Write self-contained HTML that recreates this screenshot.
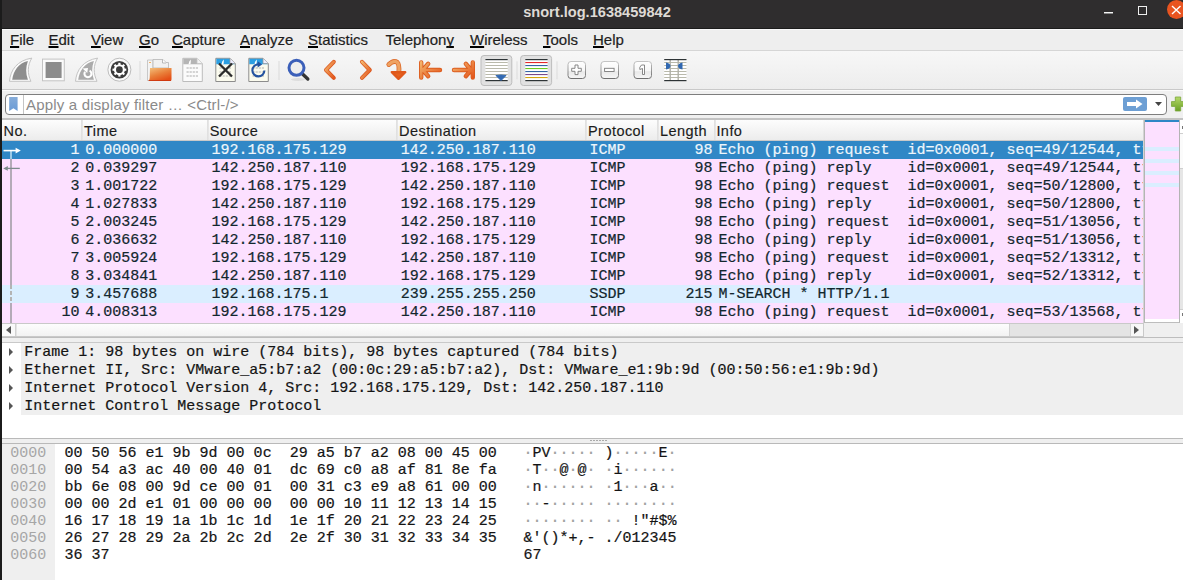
<!DOCTYPE html>
<html><head><meta charset="utf-8">
<style>
*{margin:0;padding:0;box-sizing:border-box}
html,body{width:1183px;height:580px;overflow:hidden;background:#efefef;font-family:"Liberation Sans",sans-serif}
.abs{position:absolute}
#leftstrip{position:absolute;left:0;top:0;width:2px;height:580px;background:#1b1b1b;z-index:50}
#title{position:absolute;left:0;top:0;width:1183px;height:28px;background:#2f2d2e;border-bottom:0}
#title .t{position:absolute;left:0;width:1194px;top:4.5px;text-align:center;color:#dedad5;font-weight:bold;font-size:14.6px;line-height:14px}
#titleline{position:absolute;left:0;top:28px;width:1183px;height:1px;background:#1c1c1c}
#menubar{position:absolute;left:0;top:29px;width:1183px;height:21px;background:#eeeeee;border-top:1px solid #f9f9f9}
.mi{position:absolute;top:1px;font-size:15px;line-height:17px;color:#1e1e1e;-webkit-text-stroke:0.2px #1e1e1e;white-space:pre}
.mi u{text-decoration:underline;text-decoration-thickness:2px;text-underline-offset:1px;text-decoration-color:#000;text-decoration-skip-ink:none}
#menuline{position:absolute;left:0;top:50px;width:1183px;height:1px;background:#d6d6d6}
#toolbar{position:absolute;left:0;top:51px;width:1183px;height:38px;background:linear-gradient(#f7f7f7,#ededed)}
#toolline{position:absolute;left:0;top:89px;width:1183px;height:1px;background:#c9c9c9}
#filterbar{position:absolute;left:0;top:90px;width:1183px;height:28px;background:#f0f0f0;border-top:1px solid #fbfbfb}
#fbox{position:absolute;left:5px;top:94px;width:1162px;height:21px;background:#fff;border:1px solid #7e7e7e;border-radius:4px}
#fph{position:absolute;left:26px;top:96px;font-size:15px;line-height:17px;color:#8a8a8a;letter-spacing:0.18px;white-space:pre}
#bandline{position:absolute;left:0;top:118px;width:1183px;height:2px;background:#c3c3c3}
/* packet list */
#plist{position:absolute;left:2px;top:120px;width:1142px;height:203px;background:#fff;overflow:hidden}
#hdr{position:absolute;left:0;top:120px;width:1144px;height:21px;background:linear-gradient(#fdfdfd,#ececec);border-bottom:1px solid #c9c9c9}
.hc{position:absolute;top:3px;font-size:14.5px;letter-spacing:0.45px;line-height:16px;color:#1b1b1b;-webkit-text-stroke:0.15px #1b1b1b;white-space:pre}
.hs{position:absolute;top:120px;width:2px;height:20px;background:linear-gradient(90deg,#dedede,#e8e8e8)}
.r{position:absolute;left:2px;width:1141.3px;height:18px;font-family:"Liberation Mono",monospace;font-size:15px;line-height:18px;color:#12272e;-webkit-text-stroke:0.2px currentColor;white-space:pre;overflow:hidden}
.r.icmp{background:#fce0ff}
.r.ssdp{background:#daeeff}
.r.sel{background:#3087c6;color:#eef6fb}
.c{position:absolute;top:1px}
.no{right:1063.8px;text-align:right}
.tm{left:83.3px}
.sr{left:209.5px}
.ds{left:398.8px}
.pr{left:587.6px}
.ln{right:430.8px;text-align:right}
.inf{left:716.5px}
#minimap{position:absolute;left:1144px;top:120px;width:36px;height:203px;background:#fff;border-left:1px solid #c8c8c8}
#vscroll{position:absolute;left:1180px;top:120px;width:3px;height:203px;background:#f4f4f4;border-left:1px solid #d0d0d0}
#hscroll{position:absolute;left:2px;top:323px;width:1142px;height:14px;border-right:1px solid #c9c9c9;background:#e4e4e4;border-top:1px solid #c9c9c9;border-bottom:1px solid #c9c9c9}
#hhandle{position:absolute;left:15px;top:0;width:993px;height:12px;background:linear-gradient(#fdfdfd,#f2f2f2);border-right:1px solid #d2d2d2}
#split1{position:absolute;left:0;top:337px;width:1183px;height:5px;background:#efefef;border-top:1px solid #bdbdbd}
/* detail */
#detail{position:absolute;left:2px;top:342px;width:1181px;height:97px;background:#fff;border-top:1px solid #c9c9c9}
.tr{position:absolute;left:2px;width:1181px;height:18px;font-family:"Liberation Mono",monospace;font-size:15px;line-height:19px;color:#141414;-webkit-text-stroke:0.2px currentColor;white-space:pre}
.tr .tt{position:absolute;left:19.2px;top:0;right:0;padding-left:3.1px;background:#efefef;height:18px}
.exp{position:absolute;left:7.2px;top:4.5px;width:0;height:0;border-left:4px solid #555;border-top:4px solid transparent;border-bottom:4px solid transparent}
#split2{position:absolute;left:0;top:438px;width:1183px;height:6px;background:#efefef;border-top:1px solid #b9b9b9;border-bottom:1px solid #b9b9b9}
/* bytes */
#bytes{position:absolute;left:2px;top:444px;width:1181px;height:136px;background:#fff}
#offbg{position:absolute;left:2px;top:444px;width:53px;height:136px;background:#efefef}
.hr{position:absolute;left:0;width:1183px;height:17px;font-family:"Liberation Mono",monospace;font-size:15px;line-height:19px;color:#141414;-webkit-text-stroke:0.2px currentColor;white-space:pre}
.off{position:absolute;left:10.3px;color:#a6a6a6;-webkit-text-stroke:0}
.hx{position:absolute;left:64.6px}
.as{position:absolute;left:523.4px}
.as i{font-style:normal;color:#a0a0a0}
</style></head><body>
<div id="title"><div class="t">snort.log.1638459842</div></div>
<div id="titleline"></div>
<!-- window buttons -->
<div class="abs" style="left:1104px;top:12px;width:9px;height:1px;background:#f4f4f4"></div><div class="abs" style="left:1104px;top:13px;width:9px;height:1px;background:#8a8a8a"></div>
<div class="abs" style="left:1138px;top:6px;width:9px;height:8.5px;border:1.3px solid #eeeeee"></div>
<div class="abs" style="left:1167px;top:0px;width:19px;height:19px;border-radius:50%;background:#e95420"></div>
<svg class="abs" style="left:1170px;top:4px" width="13" height="12" viewBox="0 0 13 12"><path d="M2 2 L10.5 10 M10.5 2 L2 10" stroke="#fff" stroke-width="1.4"/></svg>
<div id="menubar">
<span class="mi" style="left:10px"><u>F</u>ile</span>
<span class="mi" style="left:48.5px"><u>E</u>dit</span>
<span class="mi" style="left:91px"><u>V</u>iew</span>
<span class="mi" style="left:139px"><u>G</u>o</span>
<span class="mi" style="left:172px"><u>C</u>apture</span>
<span class="mi" style="left:240px"><u>A</u>nalyze</span>
<span class="mi" style="left:308px"><u>S</u>tatistics</span>
<span class="mi" style="left:385.5px">Telephon<u>y</u></span>
<span class="mi" style="left:470px"><u>W</u>ireless</span>
<span class="mi" style="left:543px"><u>T</u>ools</span>
<span class="mi" style="left:593px"><u>H</u>elp</span>
</div>
<div id="menuline"></div>
<div id="toolbar"></div>
<div id="toolline"></div>
<svg class="abs" style="left:0;top:0" width="700" height="90" viewBox="0 0 700 90">
<defs>
<linearGradient id="gor" x1="0" y1="0" x2="1" y2="1"><stop offset="0" stop-color="#f3b36b"/><stop offset="1" stop-color="#e4561c"/></linearGradient>
<linearGradient id="gfold" x1="0" y1="0" x2="0.6" y2="1"><stop offset="0" stop-color="#f4c27f"/><stop offset="0.55" stop-color="#e9803a"/><stop offset="1" stop-color="#e44f16"/></linearGradient>
<linearGradient id="gbtn" x1="0" y1="0" x2="0" y2="1"><stop offset="0" stop-color="#fefefe"/><stop offset="0.55" stop-color="#f7f7f7"/><stop offset="0.6" stop-color="#e9e9e9"/><stop offset="1" stop-color="#f6f6f6"/></linearGradient>
<linearGradient id="gbord" x1="0" y1="0" x2="0" y2="1"><stop offset="0" stop-color="#c4c4c4"/><stop offset="1" stop-color="#6f6f6f"/></linearGradient>
</defs>
<!-- 1 shark fin (disabled) -->
<path d="M9.5 81.3 C10.5 70 17 60.5 31.8 58.1 C27.3 65.5 27.3 73.5 30.9 81.3 Z" fill="#fbfbfb" stroke="#c3c3c3" stroke-width="1"/>
<path d="M12.2 79.7 C13.5 70.5 18.5 63.2 27.9 60.9 C25.6 67 25.6 73.5 27.9 79.7 Z" fill="#8e8e8e"/>
<!-- 2 stop -->
<rect x="42.5" y="59.1" width="21.8" height="21.7" fill="#fbfbfb" stroke="#c3c3c3" stroke-width="1"/>
<rect x="45.6" y="62" width="16" height="16" fill="#8c8c8c"/>
<!-- 3 restart fin -->
<path d="M75.5 81.3 C76.5 70 83 60.5 97.6 58.1 C93.2 65.5 93.2 73.5 97 81.3 Z" fill="#fbfbfb" stroke="#c3c3c3" stroke-width="1"/>
<path d="M78.2 79.7 C79.5 70.5 84.5 63.2 93.9 60.9 C91.6 67 91.6 73.5 93.9 79.7 Z" fill="#ababab"/>
<path d="M85 71.8 A3.5 3.5 0 1 0 89.6 70.6" fill="none" stroke="#fff" stroke-width="2.1"/>
<path d="M82.6 68.6 L88 67.9 L87.2 73 Z" fill="#fff"/>
<!-- 4 gear -->
<circle cx="119.4" cy="69.7" r="11.5" fill="#fafafa" stroke="#b5b5b5" stroke-width="0.9"/>
<circle cx="119.4" cy="69.7" r="8.8" fill="#3b3b3b"/>
<g fill="#fff"><rect x="118.30" y="62.80" width="2.2" height="2.2" transform="rotate(0 119.4 69.7)"/><rect x="118.30" y="62.80" width="2.2" height="2.2" transform="rotate(45 119.4 69.7)"/><rect x="118.30" y="62.80" width="2.2" height="2.2" transform="rotate(90 119.4 69.7)"/><rect x="118.30" y="62.80" width="2.2" height="2.2" transform="rotate(135 119.4 69.7)"/><rect x="118.30" y="62.80" width="2.2" height="2.2" transform="rotate(180 119.4 69.7)"/><rect x="118.30" y="62.80" width="2.2" height="2.2" transform="rotate(225 119.4 69.7)"/><rect x="118.30" y="62.80" width="2.2" height="2.2" transform="rotate(270 119.4 69.7)"/><rect x="118.30" y="62.80" width="2.2" height="2.2" transform="rotate(315 119.4 69.7)"/></g>
<circle cx="119.4" cy="69.7" r="5.5" fill="#fff"/>
<circle cx="119.4" cy="69.7" r="3.4" fill="#3b3b3b"/>
<!-- sep -->
<rect x="139.5" y="61" width="1" height="19" fill="#dadada"/>
<!-- 6 folder -->
<path d="M147.5 60 H153 V80.5 H147.5 Z" fill="#f3f3f3" stroke="#bcbcbc" stroke-width="0.8"/>
<path d="M153 68 V59.5 H163 L166 62.5 H168.5 V68 Z" fill="#f1f1f1" stroke="#b5b5b5" stroke-width="0.8"/>
<path d="M162.5 59.5 L162.5 63 L166 63" fill="#fff" stroke="#aaa" stroke-width="0.8"/>
<rect x="149" y="62" width="2" height="0.8" fill="#f0a040"/>
<path d="M150 68 H171.5 V79.5 Q171.5 81 170 81 H148.5 Q149.5 80 149.7 78 Z" fill="url(#gfold)"/>
<path d="M148.8 80.3 H171 V81 H148.5 Z" fill="#c8300e"/>
<!-- 7 grey file -->
<path d="M182.8 58.3 H197 L202.3 63.6 V81.5 H182.8 Z" fill="#fbfbfb" stroke="#bcbcbc" stroke-width="1"/>
<path d="M183.3 58.8 H196.7 L201.8 63.9 V64.2 H183.3 Z" fill="#b5b5b5"/>
<path d="M188.5 64.2 Q189 60.5 191 59.5 L190.5 64.2 Z" fill="#fff"/>
<path d="M197 58.5 V63.6 H202.2" fill="#f4f4f4" stroke="#c4c4c4" stroke-width="0.8"/>
<g stroke="#d3d3d3" stroke-width="1.9" stroke-dasharray="2.2 0.9"><path d="M186.5 68 H198.5 M186.5 72 H198.5 M186.5 76 H198.5"/></g>
<!-- 8 close file -->
<path d="M215.8 58.3 H230 L235.3 63.6 V81.5 H215.8 Z" fill="#fbfbee" stroke="#8d8d8d" stroke-width="1"/>
<path d="M216.3 58.8 H229.7 L234.8 63.9 V64.2 H216.3 Z" fill="#2c9fe2"/>
<path d="M221.5 64.2 Q222 60.5 224 59.5 L223.5 64.2 Z" fill="#fff"/>
<path d="M230 58.5 V63.6 H235.2" fill="#eef" stroke="#9a9a9a" stroke-width="0.8"/>
<g stroke="#d6d6ce" stroke-width="1.9" stroke-dasharray="2.2 0.9"><path d="M219.5 68 H231.5 M219.5 72 H231.5 M219.5 76 H231.5"/></g>
<path d="M219 63.5 L232 76.5 M232 63.5 L219 76.5" stroke="#2b2b2b" stroke-width="2.3"/>
<!-- 9 reload file -->
<path d="M248.8 58.3 H263 L268.3 63.6 V81.5 H248.8 Z" fill="#fbfbee" stroke="#8d8d8d" stroke-width="1"/>
<path d="M249.3 58.8 H262.7 L267.8 63.9 V64.2 H249.3 Z" fill="#2c9fe2"/>
<path d="M254.5 64.2 Q255 60.5 257 59.5 L256.5 64.2 Z" fill="#fff"/>
<path d="M263 58.5 V63.6 H268.2" fill="#eef" stroke="#9a9a9a" stroke-width="0.8"/>
<g stroke="#d6d6ce" stroke-width="1.9" stroke-dasharray="2.2 0.9"><path d="M252.5 68 H264.5 M252.5 72 H264.5 M252.5 76 H264.5"/></g>
<path d="M264.4 70.5 A6 6 0 1 1 258.5 64.4" fill="none" stroke="#24539f" stroke-width="2.1"/>
<path d="M257.6 61.3 L262.2 64.4 L257.6 67.4 Z" fill="#24539f"/>
<!-- sep -->
<rect x="278.5" y="61" width="1" height="19" fill="#dadada"/>
<!-- 11 magnifier -->
<ellipse cx="298" cy="79.5" rx="7" ry="1.5" fill="#000" opacity="0.08"/>
<path d="M302 73.5 L307.8 79" stroke="#333" stroke-width="3.4" stroke-linecap="round"/>
<circle cx="296.5" cy="67.8" r="7.5" fill="#eeeeee" stroke="#3b5fb9" stroke-width="3"/>
<!-- 12 < -->
<path d="M333.8 61.8 L326 70 L333.8 77.8" fill="none" stroke="#d9541b" stroke-width="4" stroke-linecap="round" stroke-linejoin="round"/>
<path d="M333.8 61.8 L326 70 L333.8 77.8" fill="none" stroke="url(#gor)" stroke-width="2.6" stroke-linecap="round" stroke-linejoin="round"/>
<!-- 13 > -->
<path d="M362 61.8 L369.8 70 L362 77.8" fill="none" stroke="#d9541b" stroke-width="4" stroke-linecap="round" stroke-linejoin="round"/>
<path d="M362 61.8 L369.8 70 L362 77.8" fill="none" stroke="url(#gor)" stroke-width="2.6" stroke-linecap="round" stroke-linejoin="round"/>
<!-- 14 goto -->
<path d="M388.8 64.5 Q393.5 59.8 397.2 62.3 Q399.6 64.5 398.8 73" fill="none" stroke="#dd6a2a" stroke-width="4.8" stroke-linecap="round"/>
<path d="M388.8 64.5 Q393.5 59.8 397.2 62.3 Q399.6 64.5 398.8 73" fill="none" stroke="#eea262" stroke-width="3.2" stroke-linecap="round"/>
<path d="M391.8 72.2 L405.2 72.2 L398.5 78.8 Z" fill="#e5621f" stroke="#e0581a" stroke-width="2.4" stroke-linejoin="round"/>
<!-- 15 |<- -->
<path d="M421.2 62.4 V77.6 M440 70 H424 M428.2 63.8 L422.8 70 L428.2 76.2" fill="none" stroke="#dc5c1e" stroke-width="4.4" stroke-linecap="round" stroke-linejoin="round"/>
<path d="M421.2 62.4 V77.6 M440 70 H424 M428.2 63.8 L422.8 70 L428.2 76.2" fill="none" stroke="url(#gor)" stroke-width="2.6" stroke-linecap="round" stroke-linejoin="round"/>
<!-- 16 ->| -->
<path d="M472.8 62.4 V77.6 M454 70 H470 M465.8 63.8 L471.2 70 L465.8 76.2" fill="none" stroke="#dc5c1e" stroke-width="4.4" stroke-linecap="round" stroke-linejoin="round"/>
<path d="M472.8 62.4 V77.6 M454 70 H470 M465.8 63.8 L471.2 70 L465.8 76.2" fill="none" stroke="url(#gor)" stroke-width="2.6" stroke-linecap="round" stroke-linejoin="round"/>
<!-- 17 autoscroll toggled -->
<rect x="481" y="55.5" width="30.8" height="30" rx="3" fill="#e1e1e1" stroke="#bdbdbd" stroke-width="1"/>
<rect x="485.4" y="59" width="22.3" height="22" fill="#fff"/>
<g fill="#b9b9ab"><rect x="485.4" y="62" width="22.3" height="1"/><rect x="485.4" y="65" width="22.3" height="1"/><rect x="485.4" y="68" width="22.3" height="1"/><rect x="485.4" y="71" width="22.3" height="1"/><rect x="485.4" y="74" width="22.3" height="1"/><rect x="485.4" y="77" width="22.3" height="1"/></g>
<rect x="485.4" y="59" width="22.3" height="1.2" fill="#2e3436"/>
<rect x="485.4" y="80" width="22.3" height="1.2" fill="#2e3436"/>
<path d="M496 75.5 Q501 74.5 506 75.5 L501 80.5 Z" fill="#3168b1" stroke="#3168b1" stroke-width="1" stroke-linejoin="round"/>
<rect x="516.5" y="61.3" width="1" height="18" fill="#dcdcdc"/>
<!-- 19 colorize toggled -->
<rect x="520.6" y="55.5" width="31" height="30" rx="3" fill="#e1e1e1" stroke="#bdbdbd" stroke-width="1"/>
<rect x="525.3" y="59" width="22.3" height="22" fill="#fff"/>
<rect x="525.3" y="59" width="22.3" height="1.2" fill="#2e3436"/>
<rect x="525.3" y="62" width="22.3" height="1.1" fill="#e52a2a"/>
<rect x="525.3" y="65" width="22.3" height="1.1" fill="#3465a4"/>
<rect x="525.3" y="68" width="22.3" height="1.1" fill="#6ccb22"/>
<rect x="525.3" y="71" width="22.3" height="1.1" fill="#3465a4"/>
<rect x="525.3" y="74" width="22.3" height="1.1" fill="#7a4a8a"/>
<rect x="525.3" y="77" width="22.3" height="1.1" fill="#d5a50e"/>
<rect x="525.3" y="80" width="22.3" height="1.2" fill="#2e3436"/>
<rect x="556.5" y="61.3" width="1" height="18" fill="#dcdcdc"/>
<!-- 21 zoom in -->
<rect x="568" y="61.5" width="17.5" height="17" rx="3" fill="url(#gbtn)" stroke="url(#gbord)" stroke-width="1"/>
<path d="M575 65 H578 V68.3 H581.3 V71.3 H578 V74.6 H575 V71.3 H571.7 V68.3 H575 Z" fill="#fff" stroke="#7a7a7a" stroke-width="0.9"/>
<!-- 22 zoom out -->
<rect x="601" y="61.5" width="17.5" height="17" rx="3" fill="url(#gbtn)" stroke="url(#gbord)" stroke-width="1"/>
<rect x="604.6" y="68.3" width="9.5" height="3.2" fill="#fff" stroke="#7a7a7a" stroke-width="0.9"/>
<!-- 23 normal size -->
<rect x="634" y="61.5" width="17.5" height="17" rx="3" fill="url(#gbtn)" stroke="url(#gbord)" stroke-width="1"/>
<path d="M641.5 65 H644.5 V74.5 H642.5 V68.5 L639.8 69.5 V67.3 Z" fill="#fff" stroke="#7a7a7a" stroke-width="0.9"/>
<!-- 24 resize columns -->
<rect x="664.2" y="59" width="22.3" height="22" fill="#fff"/>
<g fill="#b9b9ab"><rect x="664.2" y="62" width="22.3" height="1"/><rect x="664.2" y="65" width="22.3" height="1"/><rect x="664.2" y="68" width="22.3" height="1"/><rect x="664.2" y="71" width="22.3" height="1"/><rect x="664.2" y="74" width="22.3" height="1"/><rect x="664.2" y="77" width="22.3" height="1"/></g>
<rect x="669.5" y="59" width="1.4" height="22" fill="#b1b1a8"/>
<rect x="677.5" y="59" width="1.4" height="22" fill="#b1b1a8"/>
<rect x="664.2" y="59" width="22.3" height="1.2" fill="#2e3436"/>
<rect x="664.2" y="80" width="22.3" height="1.2" fill="#2e3436"/>
<path d="M666 62.5 Q670.5 63.5 670.5 66 Q670.5 68.5 666 69.5 Z" fill="#3168b1"/>
<path d="M682.5 62.5 Q678 63.5 678 66 Q678 68.5 682.5 69.5 Z" fill="#3168b1"/>
</svg>

<div id="filterbar"></div>
<div id="fbox"></div>
<div class="abs" style="left:23px;top:95px;width:1px;height:19px;background:#c4c4c4"></div>
<svg class="abs" style="left:9px;top:97px" width="9" height="14" viewBox="0 0 9 14"><defs><linearGradient id="gbm" x1="0" y1="0" x2="0" y2="1"><stop offset="0" stop-color="#86acd9"/><stop offset="1" stop-color="#6a9bd6"/></linearGradient></defs><path d="M0.2 0 H8.6 V14 L4.4 11.2 L0.2 14 Z" fill="url(#gbm)"/></svg>
<div id="fph">Apply a display filter … &lt;Ctrl-/&gt;</div>
<div class="abs" style="left:1123px;top:97px;width:24px;height:14px;border-radius:2px;background:#6d9fd4"></div>
<svg class="abs" style="left:1123px;top:97px" width="24" height="14" viewBox="0 0 24 14"><path d="M4 5 H13 V2.5 L19.5 7 L13 11.5 V9 H4 Z" fill="#fff"/></svg>
<svg class="abs" style="left:1155px;top:102px" width="8" height="4" viewBox="0 0 8 4"><path d="M0 0 H7 L3.5 4 Z" fill="#444"/></svg>
<svg class="abs" style="left:1171px;top:96px" width="12" height="16" viewBox="0 0 12 16"><defs><linearGradient id="ggr" x1="0" y1="0" x2="0" y2="1"><stop offset="0" stop-color="#b5d96a"/><stop offset="1" stop-color="#6aa023"/></linearGradient></defs><path d="M4.3 1 H9.7 V5.6 H14 V10.4 H9.7 V15 H4.3 V10.4 H0.5 V5.6 H4.3 Z" fill="url(#ggr)" stroke="#7aa63a" stroke-width="0.8"/></svg>
<div id="bandline"></div>
<div id="plist"></div>
<div id="hdr"></div>
<div class="hc" style="left:3.6px;top:123px">No.</div>
<div class="hc" style="left:84px;top:123px">Time</div>
<div class="hc" style="left:209.7px;top:123px">Source</div>
<div class="hc" style="left:399px;top:123px">Destination</div>
<div class="hc" style="left:588px;top:123px">Protocol</div>
<div class="hc" style="left:660px;top:123px">Length</div>
<div class="hc" style="left:716.4px;top:123px">Info</div>
<div class="hs" style="left:81px"></div>
<div class="hs" style="left:207px"></div>
<div class="hs" style="left:396px"></div>
<div class="hs" style="left:585px"></div>
<div class="hs" style="left:657px"></div>
<div class="hs" style="left:714px"></div>
<div id="rows" style="position:absolute;left:0;top:0;width:1144px;height:323px;overflow:hidden">
<div class="r sel" style="top:141px"><span class="c no">1</span><span class="c tm">0.000000</span><span class="c sr">192.168.175.129</span><span class="c ds">142.250.187.110</span><span class="c pr">ICMP</span><span class="c ln">98</span><span class="c inf">Echo (ping) request  id=0x0001, seq=49/12544, ttl=64 (reply in 2)</span></div>
<div class="r icmp" style="top:159px"><span class="c no">2</span><span class="c tm">0.039297</span><span class="c sr">142.250.187.110</span><span class="c ds">192.168.175.129</span><span class="c pr">ICMP</span><span class="c ln">98</span><span class="c inf">Echo (ping) reply    id=0x0001, seq=49/12544, ttl=128 (request in 1)</span></div>
<div class="r icmp" style="top:177px"><span class="c no">3</span><span class="c tm">1.001722</span><span class="c sr">192.168.175.129</span><span class="c ds">142.250.187.110</span><span class="c pr">ICMP</span><span class="c ln">98</span><span class="c inf">Echo (ping) request  id=0x0001, seq=50/12800, ttl=64 (reply in 4)</span></div>
<div class="r icmp" style="top:195px"><span class="c no">4</span><span class="c tm">1.027833</span><span class="c sr">142.250.187.110</span><span class="c ds">192.168.175.129</span><span class="c pr">ICMP</span><span class="c ln">98</span><span class="c inf">Echo (ping) reply    id=0x0001, seq=50/12800, ttl=128 (request in 3)</span></div>
<div class="r icmp" style="top:213px"><span class="c no">5</span><span class="c tm">2.003245</span><span class="c sr">192.168.175.129</span><span class="c ds">142.250.187.110</span><span class="c pr">ICMP</span><span class="c ln">98</span><span class="c inf">Echo (ping) request  id=0x0001, seq=51/13056, ttl=64 (reply in 6)</span></div>
<div class="r icmp" style="top:231px"><span class="c no">6</span><span class="c tm">2.036632</span><span class="c sr">142.250.187.110</span><span class="c ds">192.168.175.129</span><span class="c pr">ICMP</span><span class="c ln">98</span><span class="c inf">Echo (ping) reply    id=0x0001, seq=51/13056, ttl=128 (request in 5)</span></div>
<div class="r icmp" style="top:249px"><span class="c no">7</span><span class="c tm">3.005924</span><span class="c sr">192.168.175.129</span><span class="c ds">142.250.187.110</span><span class="c pr">ICMP</span><span class="c ln">98</span><span class="c inf">Echo (ping) request  id=0x0001, seq=52/13312, ttl=64 (reply in 8)</span></div>
<div class="r icmp" style="top:267px"><span class="c no">8</span><span class="c tm">3.034841</span><span class="c sr">142.250.187.110</span><span class="c ds">192.168.175.129</span><span class="c pr">ICMP</span><span class="c ln">98</span><span class="c inf">Echo (ping) reply    id=0x0001, seq=52/13312, ttl=128 (request in 7)</span></div>
<div class="r ssdp" style="top:285px"><span class="c no">9</span><span class="c tm">3.457688</span><span class="c sr">192.168.175.1</span><span class="c ds">239.255.255.250</span><span class="c pr">SSDP</span><span class="c ln">215</span><span class="c inf">M-SEARCH * HTTP/1.1 </span></div>
<div class="r icmp" style="top:303px"><span class="c no">10</span><span class="c tm">4.008313</span><span class="c sr">192.168.175.129</span><span class="c ds">142.250.187.110</span><span class="c pr">ICMP</span><span class="c ln">98</span><span class="c inf">Echo (ping) request  id=0x0001, seq=53/13568, ttl=64 (reply in 11)</span></div>
<div class="r icmp" style="top:321px"></div>
</div>
<!-- related packet lines -->
<div class="abs" style="left:10px;top:151px;width:1.5px;height:8px;background:#9cc9e6"></div>
<div class="abs" style="left:10px;top:159px;width:1.5px;height:126px;background:#b4abb8"></div>
<div class="abs" style="left:10px;top:285px;width:1.5px;height:18px;background:repeating-linear-gradient(#b4b4b4 0 4px,transparent 4px 6px)"></div>
<div class="abs" style="left:10px;top:303px;width:1.5px;height:20px;background:#b4abb8"></div>
<svg class="abs" style="left:3px;top:146px" width="19" height="9" viewBox="0 0 19 9"><path d="M0.5 4.6 H14" stroke="#fff" stroke-width="1.6"/><path d="M12.6 1.8 L17.8 4.6 L12.6 7.4 Z" fill="#fff"/></svg>
<svg class="abs" style="left:3px;top:164px" width="18" height="9" viewBox="0 0 18 9"><path d="M4 4.4 H16.8" stroke="#7d8b8b" stroke-width="1.3"/><path d="M0.2 4.4 L4.8 2 L4.8 6.8 Z" fill="#7d8b8b"/></svg>
<div class="abs" style="left:1144px;top:120px;width:36px;height:203px;background:#fff;border-left:1px solid #b4b4b4;border-right:1px solid #b4b4b4;border-bottom:1px solid #bdbdbd"></div>
<div class="abs" style="left:1143px;top:120px;width:1px;height:203px;background:#d4d4d4"></div>
<div class="abs" style="left:1145px;top:120px;width:34px;height:2px;background:#2d87c6"></div>
<div class="abs" style="left:1145px;top:122px;width:34px;height:197px;background:#fce0ff"></div>
<div class="abs" style="left:1145px;top:147px;width:34px;height:4px;background:#daeeff"></div>
<div class="abs" style="left:1145px;top:159px;width:34px;height:4px;background:#daeeff"></div>
<div class="abs" style="left:1145px;top:171px;width:34px;height:4px;background:#daeeff"></div>
<div class="abs" style="left:1145px;top:183px;width:34px;height:4px;background:#daeeff"></div>
<div class="abs" style="left:1180px;top:120px;width:3px;height:203px;background:#e6e6e6"></div>
<div class="abs" style="left:1180px;top:120px;width:3px;height:14px;background:#fff;border-bottom:1px solid #cfcfcf"></div>
<div class="abs" style="left:1180px;top:134px;width:3px;height:35px;background:#fbfbfb;border-bottom:1px solid #cfcfcf"></div>
<div class="abs" style="left:1180px;top:309px;width:3px;height:14px;background:#fff;border-top:1px solid #cfcfcf"></div>
<div class="abs" style="left:1182px;top:126px;width:1px;height:3px;background:#777"></div>
<div class="abs" style="left:1182px;top:313px;width:1px;height:3px;background:#777"></div>
<div id="hscroll"><div id="hhandle"></div></div>
<div class="abs" style="left:2px;top:324px;width:13px;height:12px;background:#f9f9f9"></div>
<svg class="abs" style="left:6px;top:326px" width="5" height="8" viewBox="0 0 5 8"><path d="M5 0 V8 L0 4 Z" fill="#555"/></svg>
<div class="abs" style="left:15px;top:324px;width:1px;height:12px;background:#d2d2d2"></div>
<div class="abs" style="left:1130px;top:324px;width:1px;height:12px;background:#d2d2d2"></div>
<div class="abs" style="left:1131px;top:324px;width:12px;height:12px;background:#f7f7f7"></div>
<svg class="abs" style="left:1134px;top:326px" width="5" height="8" viewBox="0 0 5 8"><path d="M0 0 V8 L5 4 Z" fill="#555"/></svg>
<div id="split1"></div>
<div id="detail"></div>
<div class="tr" style="top:343px"><span class="exp"></span><span class="tt">Frame 1: 98 bytes on wire (784 bits), 98 bytes captured (784 bits)</span></div>
<div class="tr" style="top:361px"><span class="exp"></span><span class="tt">Ethernet II, Src: VMware_a5:b7:a2 (00:0c:29:a5:b7:a2), Dst: VMware_e1:9b:9d (00:50:56:e1:9b:9d)</span></div>
<div class="tr" style="top:379px"><span class="exp"></span><span class="tt">Internet Protocol Version 4, Src: 192.168.175.129, Dst: 142.250.187.110</span></div>
<div class="tr" style="top:397px"><span class="exp"></span><span class="tt">Internet Control Message Protocol</span></div>
<div id="split2"></div>
<div class="abs" style="left:590px;top:440px;width:17px;height:1px;background:repeating-linear-gradient(90deg,#aaa 0 2px,transparent 2px 3px)"></div>
<div id="bytes"></div>
<div id="offbg"></div>
<div class="hr" style="top:444px"><span class="off">0000</span><span class="hx">00 50 56 e1 9b 9d 00 0c  29 a5 b7 a2 08 00 45 00</span><span class="as"><i>·</i>PV<i>·</i><i>·</i><i>·</i><i>·</i><i>·</i> )<i>·</i><i>·</i><i>·</i><i>·</i><i>·</i>E<i>·</i></span></div>
<div class="hr" style="top:461px"><span class="off">0010</span><span class="hx">00 54 a3 ac 40 00 40 01  dc 69 c0 a8 af 81 8e fa</span><span class="as"><i>·</i>T<i>·</i><i>·</i>@<i>·</i>@<i>·</i> <i>·</i>i<i>·</i><i>·</i><i>·</i><i>·</i><i>·</i><i>·</i></span></div>
<div class="hr" style="top:478px"><span class="off">0020</span><span class="hx">bb 6e 08 00 9d ce 00 01  00 31 c3 e9 a8 61 00 00</span><span class="as"><i>·</i>n<i>·</i><i>·</i><i>·</i><i>·</i><i>·</i><i>·</i> <i>·</i>1<i>·</i><i>·</i><i>·</i>a<i>·</i><i>·</i></span></div>
<div class="hr" style="top:495px"><span class="off">0030</span><span class="hx">00 00 2d e1 01 00 00 00  00 00 10 11 12 13 14 15</span><span class="as"><i>·</i><i>·</i>-<i>·</i><i>·</i><i>·</i><i>·</i><i>·</i> <i>·</i><i>·</i><i>·</i><i>·</i><i>·</i><i>·</i><i>·</i><i>·</i></span></div>
<div class="hr" style="top:512px"><span class="off">0040</span><span class="hx">16 17 18 19 1a 1b 1c 1d  1e 1f 20 21 22 23 24 25</span><span class="as"><i>·</i><i>·</i><i>·</i><i>·</i><i>·</i><i>·</i><i>·</i><i>·</i> <i>·</i><i>·</i> !&quot;#$%</span></div>
<div class="hr" style="top:529px"><span class="off">0050</span><span class="hx">26 27 28 29 2a 2b 2c 2d  2e 2f 30 31 32 33 34 35</span><span class="as">&amp;&#x27;()*+,- ./012345</span></div>
<div class="hr" style="top:546px"><span class="off">0060</span><span class="hx">36 37</span><span class="as">67</span></div>
<div id="leftstrip"></div>
</body></html>
